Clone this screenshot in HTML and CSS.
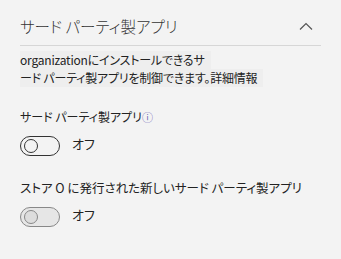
FILE: index.html
```html
<!DOCTYPE html>
<html lang="ja">
<head>
<meta charset="utf-8">
<link rel="stylesheet" href="styles.css">
</head>
<body>
<div class="panel">
  <div class="header">
    <span class="title">サード パーティ製アプリ</span>
    <svg class="chev" width="14" height="8" viewBox="0 0 14 8"><path d="M1 7.5 L7 1.5 L13 7.5" fill="none" stroke="#555" stroke-width="1.2"/></svg>
  </div>
  <div class="desc">
    <div class="line">organizationにインストールできるサ</div>
    <div class="line">ード パーティ製アプリを制御できます。詳細情報</div>
  </div>
  <div class="setting">
    <div class="label">サード パーティ製アプリ<span class="info">ⓘ</span></div>
    <div class="toggle-row">
      <span class="toggle"><span class="knob"></span></span>
      <span class="state">オフ</span>
    </div>
  </div>
  <div class="setting second">
    <div class="label big">ストア O に発行された新しいサード パーティ製アプリ</div>
    <div class="toggle-row">
      <span class="toggle disabled"><span class="knob"></span></span>
      <span class="state">オフ</span>
    </div>
  </div>
</div>
</body>
</html>
```
FILE: styles.css
```css
html, body { margin: 0; padding: 0; }
body {
  background: #f3f3f3;
  font-family: "Noto Sans CJK JP", "Liberation Sans", sans-serif;
  font-feature-settings: "palt";
  color: #222;
  width: 341px;
  height: 259px;
  overflow: hidden;
}
.panel { padding: 0 20px 0 20px; }
.header {
  display: flex;
  align-items: center;
  justify-content: space-between;
  padding-top: 7px;
  box-sizing: border-box;
  height: 46px;
  border-bottom: 1px solid #d6d6d6;
}
.title {
  font-size: 15.5px;
  font-weight: 300;
  color: #333;
}
.chev { margin-right: 8px; margin-top: 0; }
.desc { margin-top: 5px; font-size: 12px; line-height: 18px; color: #222; letter-spacing: -0.2px; }
.line { background: #eeeeee; display: inline-block; padding-right: 6px; }
.setting { margin-top: 22px; }
.label { font-size: 12px; line-height: 16px; color: #222; }
.label.big { font-size: 12.5px; }
.info { font-size: 11px; color: #6b5fb3; }
.second { margin-top: 24px; }
.toggle-row { display: flex; align-items: flex-start; margin-top: 11px; gap: 12px; }
.toggle {
  box-sizing: border-box;
  width: 40px;
  height: 20px;
  border: 1px solid #333;
  border-radius: 10px;
  display: flex;
  align-items: center;
  padding-left: 3px;
}
.knob {
  box-sizing: border-box;
  width: 14px;
  height: 14px;
  border-radius: 50%;
  border: 1px solid #333;
}
.toggle.disabled { border-color: #888; background: #e6e6e6; }
.toggle.disabled .knob { border-color: #888; background: #ddd; }
.state { font-size: 13px; line-height: 16px; color: #222; margin-top: 0; }
```
